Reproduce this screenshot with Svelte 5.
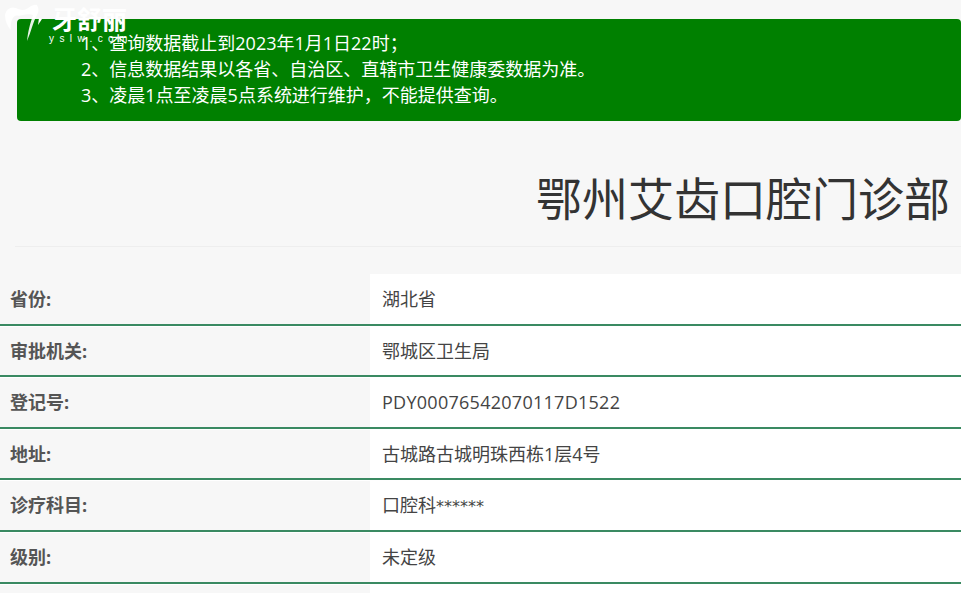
<script lang="ts">
  const rows = [
    { label: "省份:", value: "湖北省" },
    { label: "审批机关:", value: "鄂城区卫生局" },
    { label: "登记号:", value: "PDY00076542070117D1522", code: true },
    { label: "地址:", value: "古城路古城明珠西栋1层4号" },
    { label: "诊疗科目:", value: "口腔科", stars: "******" },
    { label: "级别:", value: "未定级" },
    { label: "", value: "" }
  ];
</script>

<div class="page">
  <div class="logo">
    <svg width="44" height="44" viewBox="0 0 44 44">
      <path d="M5 15C6 9 11 6 16 8C20 10 24 11 28 8C31 6 34 4 37 5C39 8 39 12 37 15C33 22 31 32 27 41C28 31 30 24 33 15C29 13 22 15 19 16C15 14 10 18 11 30C7 26 5 20 5 15Z" fill="#fff" opacity="0.9"/>
      <path d="M39 18L42 19L38 25Z" fill="#fff"/>
    </svg>
    <div class="logo-text">
      <span class="logo-name">牙舒丽</span>
      <span class="logo-url">yslw.com</span>
    </div>
  </div>

  <div class="notice">
    <p>1、查询数据截止到2023年1月1日22时；</p>
    <p>2、信息数据结果以各省、自治区、直辖市卫生健康委数据为准。</p>
    <p>3、凌晨1点至凌晨5点系统进行维护，不能提供查询。</p>
  </div>

  <h1>鄂州艾齿口腔门诊部</h1>

  <div class="table">
    {#each rows as row}
      <div class="row">
        <div class="label">{row.label}</div>
        <div class="value" class:code={row.code}>{row.value}{#if row.stars}<span class="stars">{row.stars}</span>{/if}</div>
      </div>
    {/each}
  </div>
</div>

<style>
  :global(body) {
    margin: 0;
    background: #f7f7f7;
    overflow: hidden;
  }

  .page {
    position: relative;
    height: 593px;
    overflow: hidden;
    padding-top: 19px;
    box-sizing: border-box;
    font-family: "Open Sans", "Noto Sans CJK SC", sans-serif;
    color: #444;
  }

  .logo {
    position: absolute;
    top: 0;
    left: 0;
    display: flex;
    color: #fff;
  }

  .logo-text {
    display: flex;
    flex-direction: column;
    margin-left: 8px;
    padding-top: 4px;
  }

  .logo-name {
    font-family: "Noto Sans CJK SC", serif;
    font-size: 25px;
    font-weight: 700;
    line-height: 28px;
  }

  .logo-url {
    font-family: "Liberation Sans", sans-serif;
    font-size: 10px;
    letter-spacing: 5.4px;
    line-height: 10px;
    margin: 2px 0 0 -3px;
  }

  .notice {
    margin-left: 17px;
    height: 102px;
    box-sizing: border-box;
    padding-top: 11px;
    padding-left: 64px;
    background: #008000;
    border-radius: 4px;
    color: #fff;
    font-size: 18px;
    line-height: 26px;
  }

  .notice p {
    margin: 0;
  }

  h1 {
    margin: 0 0 27px 15px;
    padding: 48px 11px 19px 0;
    border-bottom: 1px solid #eee;
    text-align: right;
    font-size: 46px;
    font-weight: 400;
    line-height: 58px;
    color: #333;
  }

  .row {
    display: grid;
    grid-template-columns: 370px 1fr;
    height: 51.6px;
    box-sizing: border-box;
    border-bottom: 2px solid #3a8a62;
    box-shadow: 0 1px 0 #fff;
    font-size: 18px;
  }

  .label {
    padding: 13px 0 0 10px;
    font-size: 18px;
    font-weight: 700;
    color: #555;
    line-height: 24px;
  }

  .value {
    padding: 13px 0 0 12px;
    background: #fff;
    line-height: 24px;
  }

  .code {
    letter-spacing: 0.27px;
  }

  .stars {
    font-family: "DejaVu Sans", sans-serif;
    font-size: 16px;
  }
</style>
